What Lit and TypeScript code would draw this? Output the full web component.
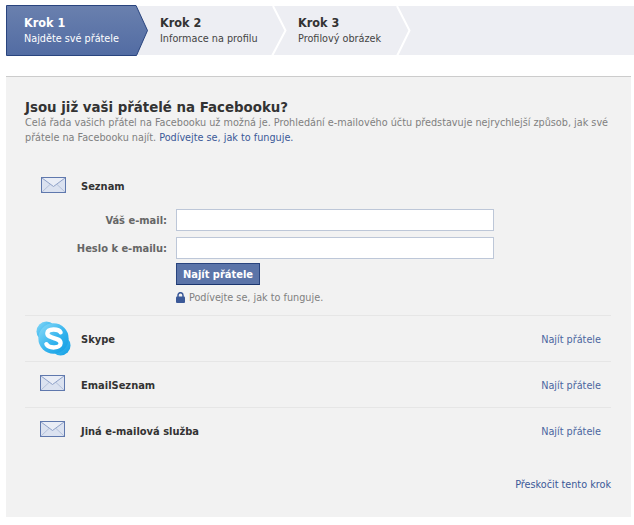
import { LitElement, html, css, svg } from "lit";
import { customElement } from "lit/decorators.js";

const envelope = html`<svg class="env" width="25" height="16" viewBox="0 0 25 16">
  <rect x="0.5" y="0.5" width="24" height="15" fill="#dbe2f0" stroke="#5f78ad"/>
  <path d="M1 15 L9.5 7 M24 15 L15.5 7" fill="none" stroke="#b4c1db"/>
  <path d="M1 1 L12.5 9.5 L24 1" fill="#e9edf6" stroke="#8ea1c8"/>
</svg>`;

const skype = html`<svg class="sky" width="35" height="35" viewBox="0 0 37 37">
  <defs><linearGradient id="sk" x1="0" y1="0" x2="1" y2="1">
    <stop offset="0" stop-color="#8fdcf8"/><stop offset="0.55" stop-color="#35b4ee"/><stop offset="1" stop-color="#0f9ce2"/>
  </linearGradient></defs>
  <circle cx="11" cy="11" r="10.5" fill="url(#sk)"/>
  <circle cx="26" cy="26" r="10.5" fill="url(#sk)"/>
  <circle cx="18.5" cy="18.5" r="16" fill="url(#sk)"/>
  <path d="M26 12 C24 8 12.5 7.5 12 13 C12 19.5 26 16.5 26 23.5 C26 29 14 29.5 11 24.5" fill="none" stroke="#fff" stroke-width="4.6" stroke-linecap="round"/>
</svg>`;

const chevrons = svg`
  <polygon points="0.5,0.5 130,0.5 141.5,25.5 130.5,50.5 0.5,50.5" fill="url(#st)" stroke="#29447e"/>
  <polyline points="267,1 279.5,25.5 266,51" fill="none" stroke="#fff" stroke-width="2"/>
  <polyline points="391,1 403.5,25.5 391,51" fill="none" stroke="#fff" stroke-width="2"/>
`;

@customElement("app-root")
export class AppRoot extends LitElement {
  static styles = css`
    :host { display: block; width: 634px; height: 525px; background: #fff; font-family: "DejaVu Sans Condensed", "DejaVu Sans", sans-serif; font-stretch: condensed; font-size: 10.75px; color: #333; box-sizing: border-box; padding-top: 6px; overflow: hidden; }
    .steps { position: relative; display: flex; height: 49px; margin-left: 6px; background: #edeef3; }
    .bg { position: absolute; left: 0; top: -1px; }
    .step { position: relative; display: flex; flex-direction: column; justify-content: center; box-sizing: border-box; padding-top: 1px; }
    .s1 { width: 136px; padding-left: 18px; }
    .s2 { width: 138px; padding-left: 18px; }
    .s3 { padding-left: 18px; }
    .step b { font-size: 12.5px; line-height: 16px; color: #333; font-weight: bold; }
    .step span { font-size: 10.75px; line-height: 16px; color: #444; }
    .s1 b, .s1 span { color: #fff; }
    .panel { margin: 21px 3px 0 6px; height: 441px; box-sizing: border-box; background: #f2f2f2; border-top: 1px solid #ccc; padding: 23px 20px 0 19px; }
    h1 { margin: 0; font-size: 14.85px; line-height: 15px; color: #333; font-weight: bold; }
    .intro { margin: 0; width: 590px; line-height: 15px; color: #808080; }
    a { color: #3b5998; text-decoration: none; }
    .seznam { display: flex; align-items: center; margin: 29px 0 0 16px; height: 24px; gap: 15px; font-weight: bold; font-size: 11px; }
    .env { display: block; }
    .seznam .env { margin-top: -2px; }
    .form { display: grid; grid-template-columns: 142px 318px; column-gap: 9px; row-gap: 6px; padding-top: 11px; align-items: center; }
    label { text-align: right; font-weight: bold; font-size: 11px; color: #666; }
    .inp { box-sizing: border-box; height: 22px; background: #fff; border: 1px solid #bdc7d8; }
    .actions { display: flex; flex-direction: column; align-items: flex-start; gap: 5px; margin-left: 151px; padding-top: 4px; }
    .btn { box-sizing: border-box; width: 84px; height: 22px; display: flex; align-items: center; justify-content: center; background: #5b74a8; border: 1px solid #29447e; border-bottom-color: #1a356e; color: #fff; font-weight: bold; font-size: 11px; }
    .lock { display: flex; align-items: center; gap: 4px; height: 14px; color: #808080; }
    .rows { margin-top: 11px; }
    .row { display: flex; align-items: center; height: 45px; border-top: 1px solid #e6e6e6; font-weight: bold; font-size: 11px; color: #333; }
    .row span { padding-top: 2px; }
    .ic { width: 56px; display: flex; justify-content: center; box-sizing: border-box; padding-right: 1px; }
    .ic .sky { margin-left: 1px; }
    .ic .env { margin-top: -3px; }
    .row a { margin-left: auto; margin-right: 10px; padding-top: 2px; font-weight: normal; font-size: 10.75px; color: #4b66a0; }
    .skip { text-align: right; margin-top: 25px; line-height: 14px; }
  `;

  render() {
    return html`
      <div class="steps">
        <svg class="bg" width="628" height="52" viewBox="0 0 628 52">
          <defs><linearGradient id="st" x1="0" y1="0" x2="0" y2="1"><stop offset="0" stop-color="#6a80ae"/><stop offset="1" stop-color="#526ca3"/></linearGradient></defs>
          ${chevrons}
        </svg>
        <div class="step s1"><b>Krok 1</b><span>Najděte své přátele</span></div>
        <div class="step s2"><b>Krok 2</b><span>Informace na profilu</span></div>
        <div class="step s3"><b>Krok 3</b><span>Profilový obrázek</span></div>
      </div>
      <div class="panel">
        <h1>Jsou již vaši přátelé na Facebooku?</h1>
        <p class="intro">Celá řada vašich přátel na Facebooku už možná je. Prohledání e-mailového účtu představuje nejrychlejší způsob, jak své přátele na Facebooku najít. <a href="#">Podívejte se, jak to funguje.</a></p>
        <div class="seznam">${envelope}<span>Seznam</span></div>
        <div class="form">
          <label>Váš e-mail:</label><div class="inp"></div>
          <label>Heslo k e-mailu:</label><div class="inp"></div>
        </div>
        <div class="actions">
          <div class="btn">Najít přátele</div>
          <div class="lock"><svg width="9" height="11" viewBox="0 0 9 11"><path d="M2 5V3.2a2.5 2.5 0 0 1 5 0V5" fill="none" stroke="#3b5998" stroke-width="1.5"/><rect y="4.5" width="9" height="6.5" rx="1" fill="#3b5998"/></svg><span>Podívejte se, jak to funguje.</span></div>
        </div>
        <div class="rows">
          <div class="row"><div class="ic">${skype}</div><span>Skype</span><a href="#">Najít přátele</a></div>
          <div class="row"><div class="ic">${envelope}</div><span>EmailSeznam</span><a href="#">Najít přátele</a></div>
          <div class="row"><div class="ic">${envelope}</div><span>Jiná e-mailová služba</span><a href="#">Najít přátele</a></div>
        </div>
        <div class="skip"><a href="#">Přeskočit tento krok</a></div>
      </div>
    `;
  }
}
